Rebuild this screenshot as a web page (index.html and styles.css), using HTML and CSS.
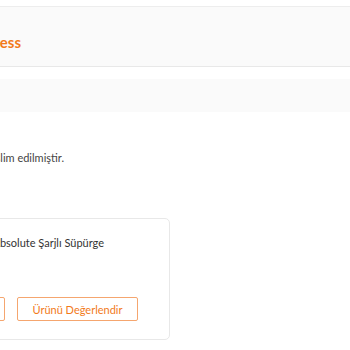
FILE: index.html
```html
<!DOCTYPE html>
<html lang="tr">
<head>
<meta charset="utf-8">
<link rel="stylesheet" href="styles.css">
</head>
<body>
<div class="page">
  <div class="top-band">
    <div class="clip brand-clip"><span class="brand">Trendyol Express</span></div>
  </div>
  <div class="band2"></div>
  <div class="clip status-clip"><span class="status">Teslim edilmiştir.</span></div>
  <div class="card">
    <div class="clip product-clip"><span class="product">Dyson V8 Absolute Şarjlı Süpürge</span></div>
    <div class="actions">
      <div class="clip btn-clip"><button class="btn">Tekrar Satın Al</button></div>
      <button class="btn">Ürünü Değerlendir</button>
    </div>
  </div>
</div>
</body>
</html>
```

FILE: styles.css
```css
* { box-sizing: border-box; }
html, body { margin: 0; padding: 0; background: #fff; }
body { font-family: "Lato", "Open Sans", sans-serif; color: #333; }
.page { width: 350px; height: 350px; overflow: hidden; }
.clip { display: flex; justify-content: flex-end; white-space: nowrap; }
.top-band {
  margin-top: 6px;
  height: 61px;
  background: #fafafa;
  border-top: 1px solid #ededed;
  border-bottom: 1px solid #e8e8e8;
  padding-top: 26px;
}
.brand-clip { width: 21px; }
.brand { color: #f27a1a; font-size: 15px; font-weight: 700; line-height: 18px; }
.band2 { margin-top: 12px; height: 33px; background: #fafafa; }
.status-clip { width: 64px; margin-top: 39px; }
.status { font-size: 11px; line-height: 14px; color: #444; }
.card {
  margin-top: 53px;
  margin-left: -200px;
  width: 370px;
  height: 122px;
  border: 1px solid #e8e8e8;
  border-radius: 5px;
  padding-top: 17px;
}
.product-clip { width: 303px; }
.product { font-size: 11px; line-height: 14px; color: #333; }
.actions { display: flex; gap: 12px; margin-top: 47px; }
.btn-clip { width: 204px; }
.btn {
  height: 24px;
  width: 121px;
  padding: 0;
  background: #fff;
  border: 1px solid #f5a66f;
  border-radius: 2px;
  color: #f27a1a;
  font-family: "Lato", "Open Sans", sans-serif;
  font-size: 11px;
  white-space: nowrap;
  flex: none;
}
```
